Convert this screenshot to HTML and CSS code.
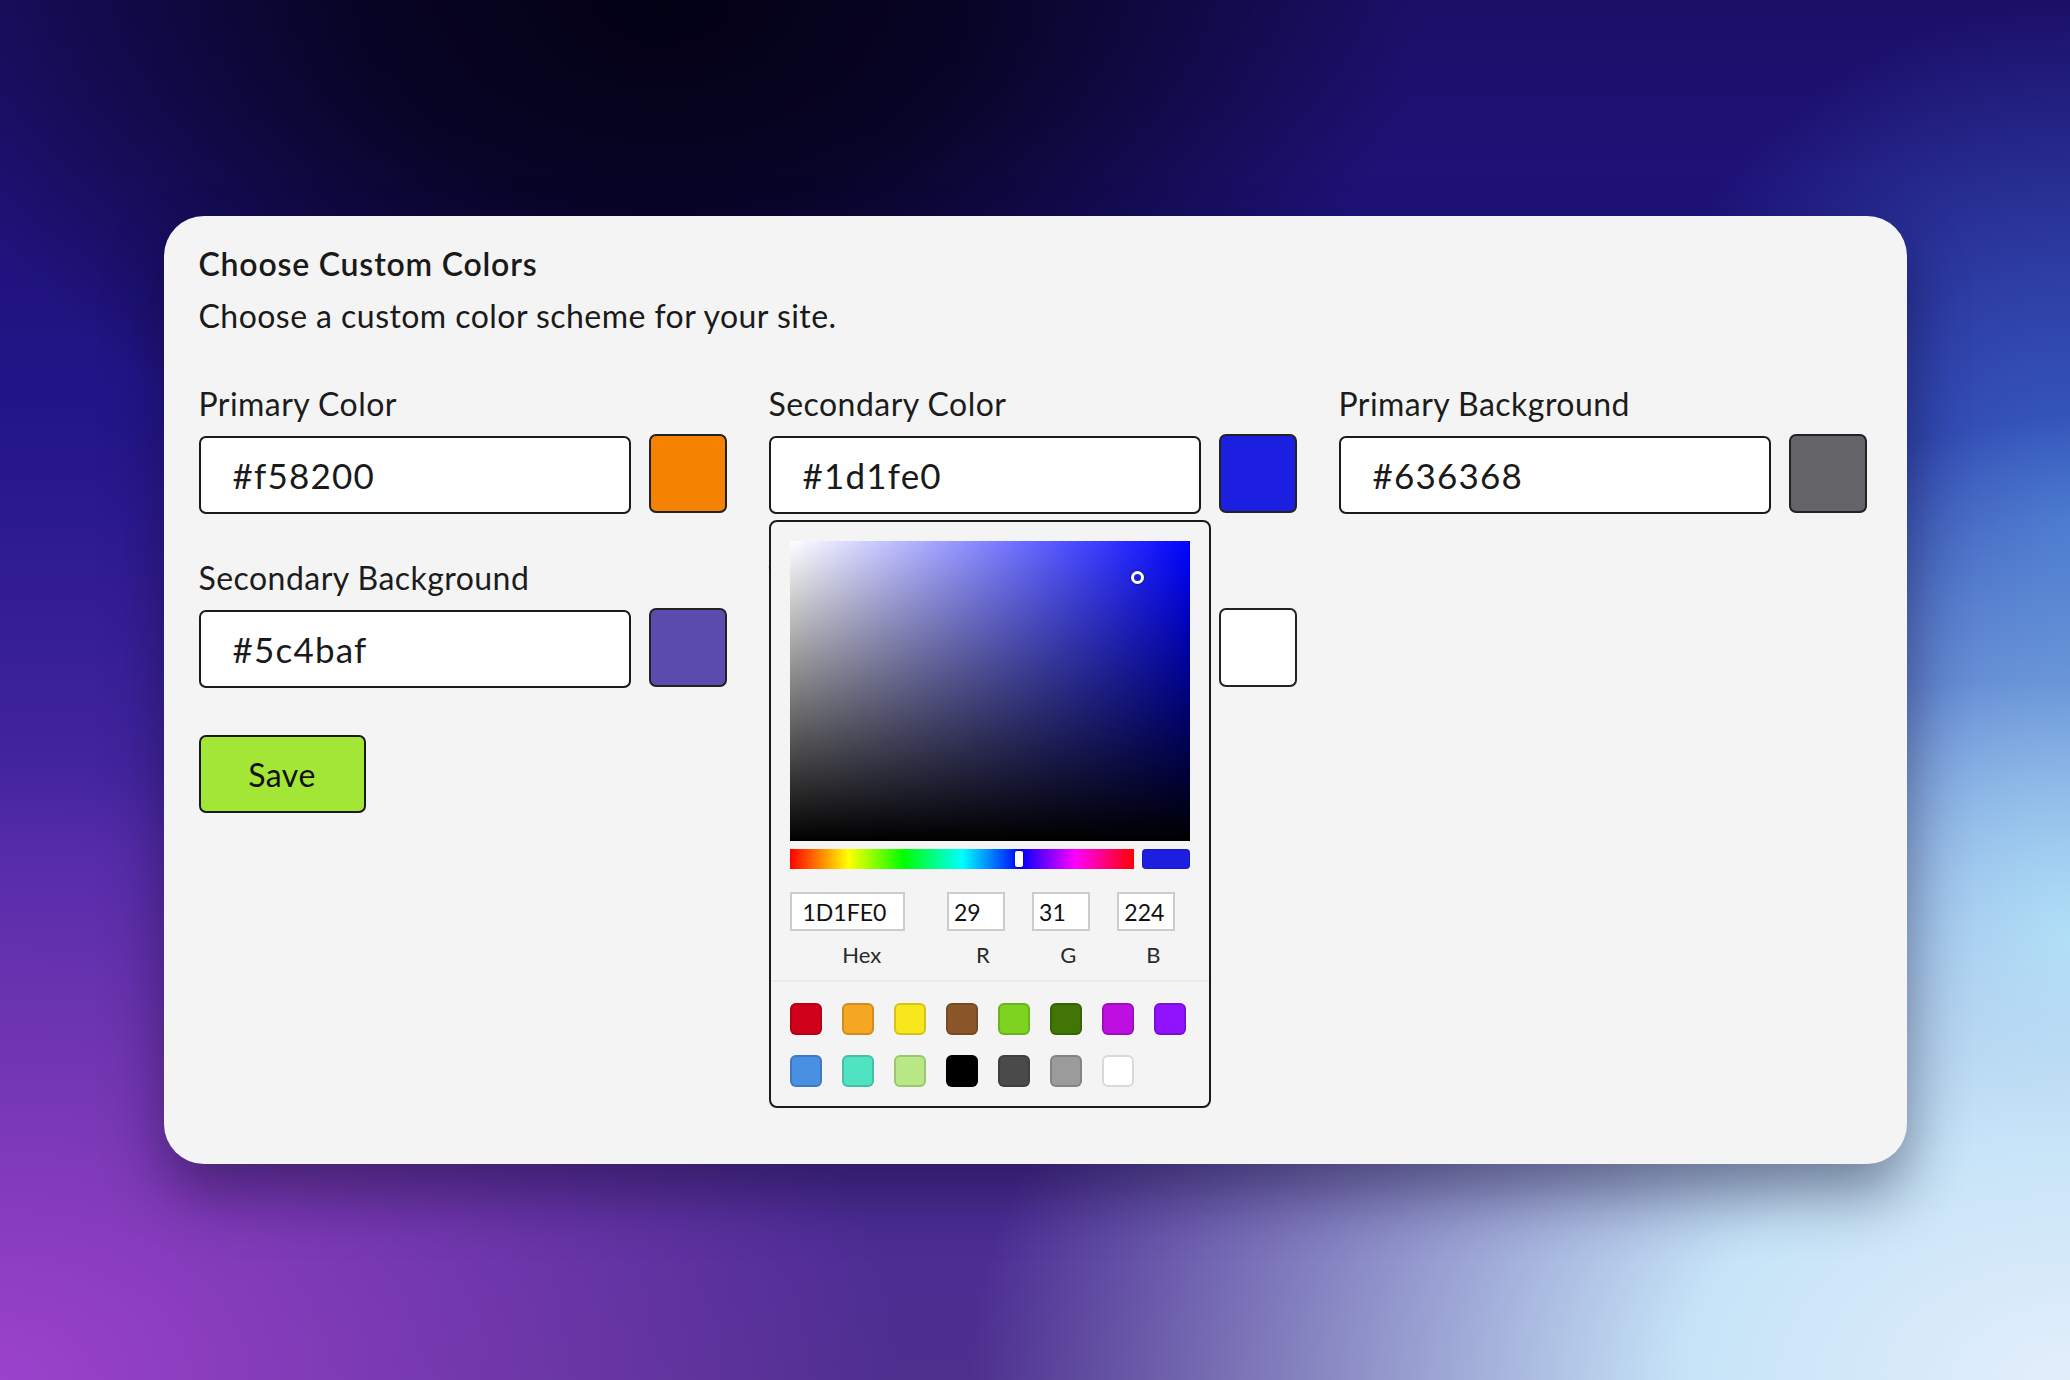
FILE: index.html
```html
<!DOCTYPE html>
<html lang="en">
<head>
<meta charset="utf-8">
<title>Choose Custom Colors</title>
<link rel="stylesheet" href="styles.css">
</head>
<body>
<main class="card">
  <h1 class="title">Choose Custom Colors</h1>
  <p class="subtitle">Choose a custom color scheme for your site.</p>

  <div class="grid">
    <div class="field">
      <label class="label">Primary Color</label>
      <div class="control">
        <input class="hex-input" type="text" value="#f58200">
        <span class="swatch swatch-orange"></span>
      </div>
    </div>

    <div class="field field-open">
      <label class="label">Secondary Color</label>
      <div class="control">
        <input class="hex-input" type="text" value="#1d1fe0">
        <span class="swatch swatch-blue"></span>
        <div class="picker">
          <div class="sv"><span class="sv-cursor"></span></div>
          <div class="hue-row">
            <div class="hue"><span class="hue-handle"></span></div>
            <span class="preview"></span>
          </div>
          <div class="fields">
            <div class="f f-hex"><input class="f-input f-input-hex" type="text" value="1D1FE0"><span class="f-label">Hex</span></div>
            <div class="f"><input class="f-input" type="text" value="29"><span class="f-label">R</span></div>
            <div class="f"><input class="f-input" type="text" value="31"><span class="f-label">G</span></div>
            <div class="f"><input class="f-input" type="text" value="224"><span class="f-label">B</span></div>
          </div>
          <div class="presets">
            <span class="p p1"></span><span class="p p2"></span><span class="p p3"></span><span class="p p4"></span>
            <span class="p p5"></span><span class="p p6"></span><span class="p p7"></span><span class="p p8"></span>
            <span class="p p9"></span><span class="p p10"></span><span class="p p11"></span><span class="p p12"></span>
            <span class="p p13"></span><span class="p p14"></span><span class="p p15"></span>
          </div>
        </div>
      </div>
    </div>

    <div class="field">
      <label class="label">Primary Background</label>
      <div class="control">
        <input class="hex-input" type="text" value="#636368">
        <span class="swatch swatch-gray"></span>
      </div>
    </div>

    <div class="field">
      <label class="label">Secondary Background</label>
      <div class="control">
        <input class="hex-input" type="text" value="#5c4baf">
        <span class="swatch swatch-purple"></span>
      </div>
    </div>

    <div class="field">
      <label class="label">Text Color</label>
      <div class="control">
        <input class="hex-input" type="text" value="#ffffff">
        <span class="swatch swatch-white"></span>
      </div>
    </div>
  </div>

  <button class="save" type="button">Save</button>
</main>
</body>
</html>
```

FILE: styles.css
```css
* { box-sizing: border-box; }

html, body { margin: 0; padding: 0; }

body {
  width: 2070px;
  height: 1380px;
  overflow: hidden;
  display: flex;
  align-items: center;
  justify-content: center;
  font-family: Lato, "Noto Sans", sans-serif;
  color: #1c1c1c;
  background:
    radial-gradient(ellipse 760px 520px at 32% 0%, rgba(3,1,20,1) 0%, rgba(3,1,20,0.8) 40%, rgba(3,1,20,0) 100%),
    radial-gradient(ellipse 1100px 700px at 100% 100%, #e3eefb 0%, #c6e4f8 35%, rgba(170,220,246,0) 100%),
    radial-gradient(ellipse 520px 520px at 100% 68%, rgba(150,216,246,1) 0%, rgba(150,216,246,0) 100%),
    radial-gradient(ellipse 460px 520px at 100% 38%, rgba(60,110,205,0.9) 0%, rgba(60,110,205,0) 100%),
    radial-gradient(ellipse 900px 620px at 0% 100%, #9c42cc 0%, rgba(156,66,204,0) 100%),
    linear-gradient(180deg, #1b0f68 0%, #22158a 30%, #4a28a4 62%, #4d2f8e 100%);
}

/* ---------- card ---------- */
.card {
  width: 1743px;
  height: 948px;
  background: #f4f4f4;
  border-radius: 40px;
  padding: 28px 36px 0 35px;
  box-shadow: 0 30px 60px rgba(12, 6, 40, 0.45);
}

.title {
  margin: 0;
  font-size: 32px;
  line-height: 40px;
  font-weight: 600;
  letter-spacing: 0.8px;
  color: #1a1a1a;
}

.subtitle {
  margin: 12px 0 0;
  font-size: 32px;
  line-height: 40px;
  font-weight: 400;
  letter-spacing: 0.45px;
  color: #1a1a1a;
}

/* ---------- fields grid ---------- */
.grid {
  margin-top: 48px;
  display: grid;
  grid-template-columns: repeat(3, 528px);
  column-gap: 42px;
  row-gap: 44px;
}

.field {
  display: flex;
  flex-direction: column;
  position: relative;
}

.field-open { z-index: 2; }

.label {
  font-size: 32px;
  line-height: 40px;
  margin-bottom: 12px;
  letter-spacing: 0.45px;
  color: #1c1c1c;
}

.control {
  display: flex;
  align-items: flex-start;
  gap: 18px;
  position: relative;
}

.hex-input {
  flex: 1;
  min-width: 0;
  height: 78px;
  border: 2px solid #1a1a1a;
  border-radius: 7px;
  background: #fff;
  padding: 0 0 0 32px;
  font-family: Lato, "Noto Sans", sans-serif;
  font-size: 35px;
  letter-spacing: 1.2px;
  color: #1a1a1a;
  outline: none;
}

.swatch {
  width: 78px;
  height: 79px;
  margin-top: -2px;
  border: 2px solid #222;
  border-radius: 7px;
  flex: none;
}

.swatch-orange { background: #f58200; }
.swatch-blue { background: #1d1fe0; }
.swatch-gray { background: #636368; }
.swatch-purple { background: #5c4baf; }
.swatch-white { background: #ffffff; }

/* ---------- picker popover ---------- */
.picker {
  position: absolute;
  left: 0;
  top: calc(100% + 6px);
  width: 442px;
  background: #f4f4f4;
  border: 2px solid #1a1a1a;
  border-radius: 8px;
  padding: 19px 19px 19px;
}

.sv {
  position: relative;
  width: 400px;
  height: 300px;
  background:
    linear-gradient(to top, #000 0%, rgba(0,0,0,0) 100%),
    linear-gradient(to right, #fff 0%, rgba(255,255,255,0) 100%),
    #0003ff;
}

.sv-cursor {
  position: absolute;
  left: 341px;
  top: 30px;
  width: 13px;
  height: 13px;
  border-radius: 50%;
  border: 3px solid #fff;
  box-shadow: 0 0 1px 1px rgba(0,0,0,0.3);
}

.hue-row {
  margin-top: 8px;
  display: flex;
  gap: 8px;
  height: 20px;
}

.hue {
  position: relative;
  flex: 1;
  height: 20px;
  background: linear-gradient(to right, #f00 0%, #ff0 17%, #0f0 33%, #0ff 50%, #00f 67%, #f0f 83%, #f00 100%);
}

.hue-handle {
  position: absolute;
  left: 225px;
  top: 2px;
  width: 8px;
  height: 16px;
  border-radius: 2px;
  background: #fff;
  box-shadow: 0 0 2px rgba(0,0,0,0.5);
}

.preview {
  width: 48px;
  height: 20px;
  border-radius: 4px;
  background: #1d1fe0;
  box-shadow: inset 0 0 0 1px rgba(0,0,0,0.15);
}

.fields {
  margin-top: 23px;
  display: flex;
}

.f {
  flex: 1;
  padding-left: 13px;
  display: flex;
  flex-direction: column;
}

.f-hex {
  flex: 2;
  padding-left: 0;
}

.f-input {
  width: 80%;
  height: 39px;
  border: 2px solid #cccccc;
  background: #fff;
  padding: 0 0 0 5px;
  font-family: Lato, "Noto Sans", sans-serif;
  font-size: 23px;
  color: #111;
  outline: none;
}

.f-input-hex { padding-left: 11px; }

.f-label {
  margin-top: 11px;
  text-align: center;
  font-size: 22px;
  line-height: 26px;
  color: #2a2a2a;
}

.presets {
  margin: 12px -19px 0;
  padding: 21px 19px 0;
  border-top: 2px solid #ebebeb;
  display: grid;
  grid-template-columns: repeat(8, 32px);
  gap: 20px;
}

.p {
  width: 32px;
  height: 32px;
  border-radius: 6px;
  box-shadow: inset 0 0 0 2px rgba(0,0,0,0.15);
}

.p1 { background: #d0021b; }
.p2 { background: #f5a623; }
.p3 { background: #f8e71c; }
.p4 { background: #8b572a; }
.p5 { background: #7ed321; }
.p6 { background: #417505; }
.p7 { background: #bd10e0; }
.p8 { background: #9013fe; }
.p9 { background: #4a90e2; }
.p10 { background: #50e3c2; }
.p11 { background: #b8e986; }
.p12 { background: #000000; }
.p13 { background: #4a4a4a; }
.p14 { background: #9b9b9b; }
.p15 { background: #ffffff; }

/* ---------- save ---------- */
.save {
  margin-top: 47px;
  width: 167px;
  height: 78px;
  background: #a3e635;
  border: 2px solid #1a1a1a;
  border-radius: 7px;
  font-family: Lato, "Noto Sans", sans-serif;
  font-size: 32px;
  letter-spacing: 0.45px;
  color: #111;
  padding: 0;
}
```
